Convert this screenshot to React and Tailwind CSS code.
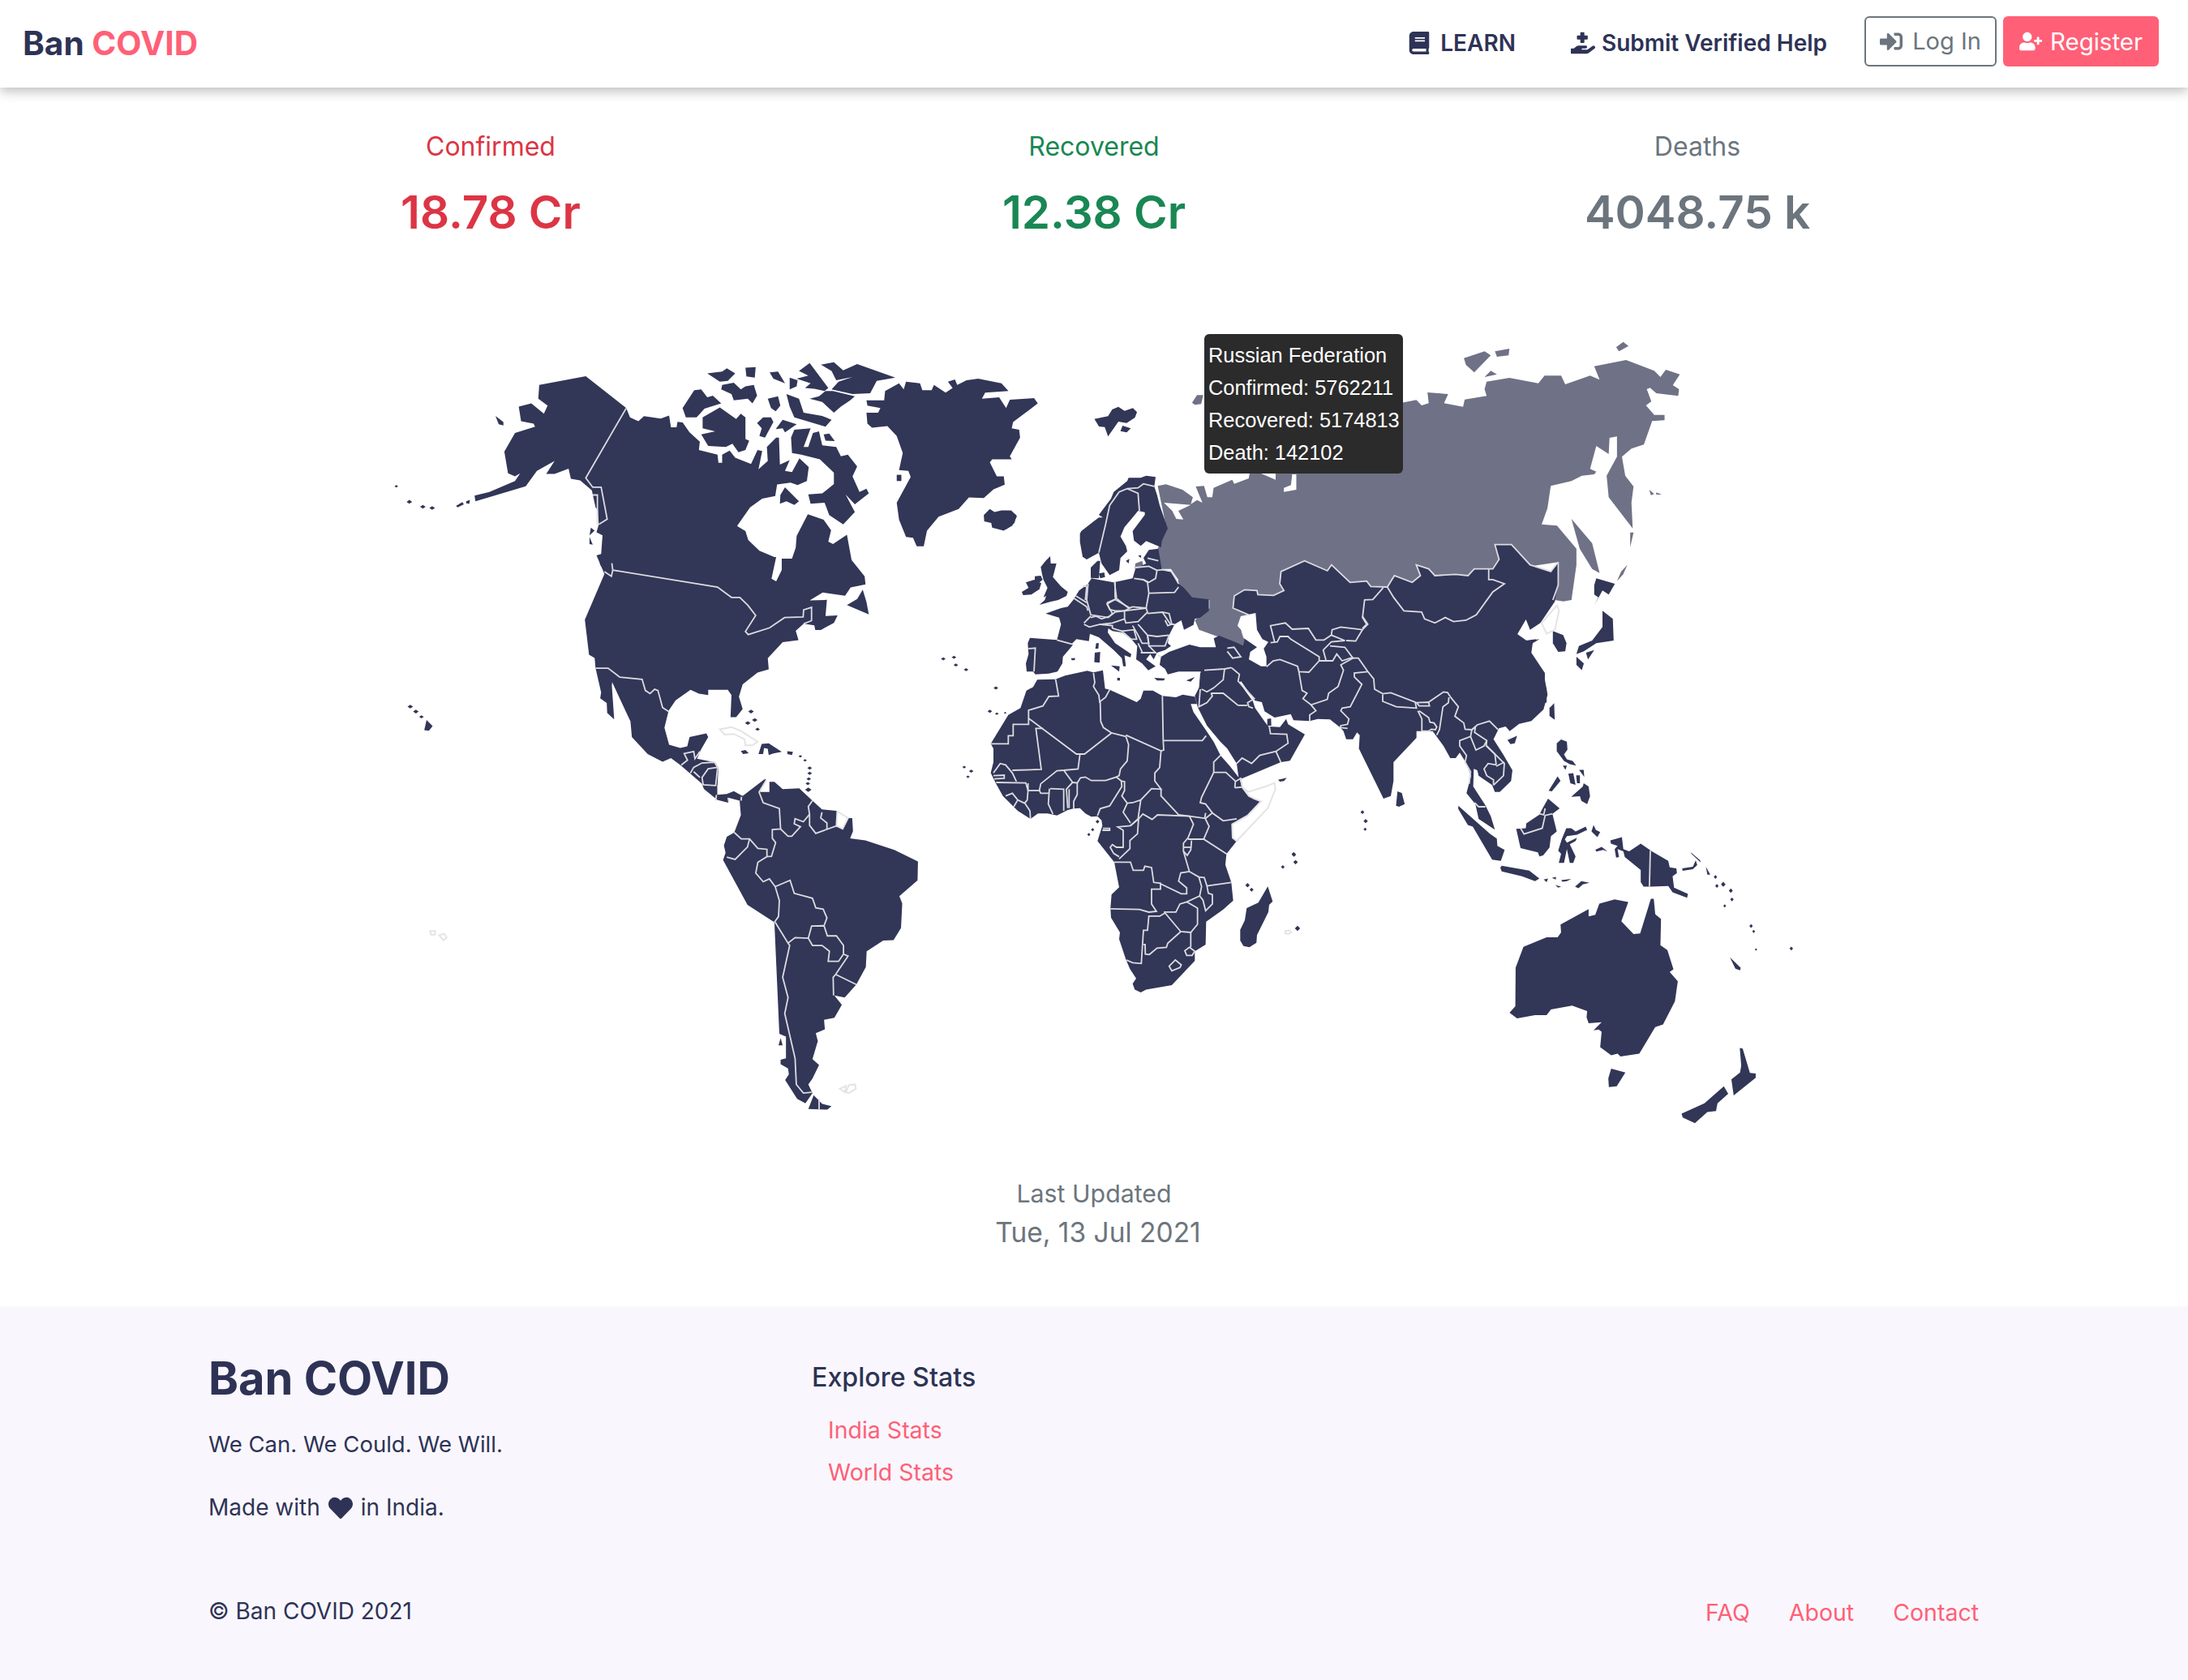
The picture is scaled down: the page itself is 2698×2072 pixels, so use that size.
import { FaBook, FaHandHoldingMedical, FaSignInAlt, FaUserPlus, FaHeart } from 'react-icons/fa';

// small diamond shapes for tiny islands: [x, y, r]
const dots = (list) =>
  list.map(([x, y, r]) => `M${x - r},${y} L${x},${y - r} L${x + r},${y} L${x},${y + r} Z`).join(' ');

// Map data is grouped by region, each with its own translate/scale
const ZONES = [
  {
    // North America, Greenland, Iceland
    t: [460, 400, 0.574, 0.3827],
    land: [
      'M357,195 L457,167 L544,270 L552,300 L570,312 L582,296 L618,304 L636,294 L640,332 L652,332 L654,314 L665,316 L680,348 L702,378 L700,405 L740,420 L742,446 L750,446 L750,420 L766,407 L778,430 L812,450 L826,405 L836,408 L828,467 L848,440 L846,395 L866,365 L872,365 L874,452 L895,438 L885,472 L900,476 L916,432 L936,460 L932,505 L912,518 L897,510 L868,516 L864,553 L836,562 L810,590 L782,650 L800,666 L806,695 L830,730 L862,750 L866,750 L856,820 L866,828 L878,792 L878,755 L900,755 L908,720 L910,682 L934,612 L968,630 L984,664 L978,700 L988,708 L1018,678 L1028,760 L1056,812 L1058,838 L1026,848 L1014,875 L966,864 L938,890 L975,888 L972,940 L998,938 L990,962 L962,985 L950,985 L948,970 L925,965 L908,988 L914,1018 L880,1024 L848,1076 L850,1112 L826,1122 L794,1160 L786,1200 L794,1240 L780,1266 L768,1266 L770,1195 L762,1178 L720,1178 L720,1195 L700,1190 L682,1178 L650,1212 L635,1245 L626,1300 L636,1355 L660,1365 L675,1360 L680,1330 L716,1318 L720,1330 L704,1372 L696,1400 L735,1412 L742,1430 L740,1484 L712,1490 L710,1485 L660,1420 L640,1398 L622,1410 L590,1385 L556,1330 L553,1280 L505,1125 L515,1130 L513,1165 L518,1273 L503,1252 L502,1220 L488,1205 L490,1186 L478,1108 L476,1075 L464,1065 L455,952 L497,805 L493,790 L480,745 L490,740 L493,680 L480,670 L485,645 L483,600 L478,590 L470,535 L445,503 L425,498 L420,465 L390,482 L372,482 L390,440 L352,472 L328,522 L220,570 L218,552 L250,540 L305,505 L316,480 L305,490 L290,480 L282,410 L305,350 L348,330 L345,320 L318,312 L313,265 L340,255 L367,288 L375,262 L355,240 Z',
      'M1040,128 L1122,172 L1082,182 L1068,222 L1030,225 L985,210 L1000,185 L1030,170 L995,180 L985,150 L962,130 L990,122 L1010,148 Z',
      'M938,125 L978,205 L970,215 L948,208 L928,205 L940,190 L910,175 L935,165 L915,150 Z',
      'M718,158 L750,152 L760,142 L778,158 L762,182 L745,185 Z',
      'M800,140 L822,138 L820,172 L802,168 Z',
      'M852,155 L870,152 L885,190 L860,175 Z',
      'M895,172 L912,180 L910,200 L895,210 Z',
      'M750,195 L775,188 L790,210 L800,200 L818,195 L825,230 L815,255 L805,240 L775,245 L770,225 L748,210 Z',
      'M690,212 L705,210 L718,235 L730,230 L748,255 L712,272 L695,300 L672,300 L665,270 Z',
      'M708,300 L745,268 L780,305 L790,288 L800,300 L800,370 L808,375 L800,405 L785,412 L772,385 L758,395 L720,392 L705,355 L735,345 L708,335 Z',
      'M848,240 L870,232 L875,262 L865,280 L855,270 Z',
      'M888,225 L915,240 L925,285 L965,295 L985,308 L972,330 L905,300 L895,265 Z',
      'M972,215 L988,215 L1035,232 L1025,245 L1005,265 L990,285 L965,250 L938,240 L958,232 Z',
      'M825,318 L838,300 L855,300 L860,315 L842,365 L830,360 L835,335 Z',
      'M865,338 L880,308 L910,322 L885,348 L880,335 Z',
      'M905,340 L940,335 L925,395 L935,395 L945,350 L958,345 L965,390 L995,395 L1005,425 L1020,420 L1040,458 L1030,490 L1045,540 L1060,530 L1065,545 L1035,580 L1015,548 L1035,605 L1010,645 L980,615 L970,575 L940,578 L935,548 L965,545 L990,515 L990,478 L960,435 L920,420 L900,415 L898,365 Z',
      'M885,525 L915,570 L905,582 L888,570 L874,578 L875,550 Z',
      'M968,355 L980,352 L992,376 L972,375 Z',
      'M1052,855 L1060,895 L1065,935 L1018,905 L1040,885 Z',
      'M263,295 L280,315 L280,326 L270,322 Z',
      'M178,585 L192,573 L195,580 L182,590 Z',
      'M200,570 L208,566 L207,578 L200,577 Z',
      'M115,1275 L128,1295 L120,1310 L110,1308 Z',
      'M468,655 L476,665 L465,680 Z',
      'M465,685 L472,710 L465,708 Z',
      'M484,745 L495,745 L513,770 L512,798 L497,797 L488,775 Z',
      // Greenland
      'M1100,215 L1130,190 L1140,210 L1145,185 L1175,190 L1180,212 L1200,212 L1205,195 L1230,220 L1245,205 L1235,185 L1250,178 L1255,195 L1275,180 L1300,175 L1350,190 L1365,215 L1315,220 L1308,240 L1345,235 L1360,270 L1368,243 L1420,238 L1428,255 L1375,315 L1372,335 L1388,340 L1390,365 L1368,425 L1372,435 L1330,435 L1325,445 L1340,490 L1355,490 L1357,517 L1333,532 L1312,560 L1280,558 L1258,595 L1215,620 L1190,665 L1183,715 L1168,715 L1160,688 L1145,685 L1130,630 L1125,575 L1155,492 L1150,472 L1130,470 L1138,415 L1125,360 L1105,328 L1072,333 L1062,320 L1060,285 L1085,285 L1090,270 L1062,262 L1060,245 L1098,245 Z',
      'M1125,485 L1135,485 L1135,505 L1125,505 Z',
      // Iceland
      'M1325,595 L1335,605 L1350,600 L1368,600 L1382,615 L1378,640 L1355,665 L1330,655 L1328,640 L1313,635 L1312,615 Z',
      // Caribbean
      'M790,1375 L800,1372 L807,1382 L795,1385 Z',
      'M835,1352 L850,1350 L878,1378 L860,1383 L850,1388 L848,1368 L840,1365 L838,1385 L828,1385 Z',
      'M890,1376 L902,1378 L900,1388 L890,1385 Z',
      dots([[50, 522, 4], [78, 572, 6], [107, 588, 6], [127, 592, 6], [80, 1232, 6], [92, 1248, 6], [104, 1265, 5],
        [812, 1248, 6], [820, 1275, 6], [805, 1285, 6], [826, 1305, 5],
        [918, 1392, 4], [928, 1405, 4], [938, 1430, 5], [938, 1447, 5], [936, 1465, 5], [934, 1480, 5], [935, 1500, 7],
        [1225, 1078, 5], [1248, 1073, 5], [1252, 1098, 5], [1274, 1113, 5], [1338, 1172, 5],
        [1325, 1247, 5], [1340, 1255, 4], [1358, 1252, 3], [1270, 1427, 4], [1285, 1440, 5], [1278, 1458, 4]]),
    ],
    white: ['M1343,455 L1360,450 L1360,470 L1345,468 Z'],
    hollow: ['M745,1305 L770,1298 L790,1310 L800,1320 L826,1345 L815,1357 L800,1357 L798,1337 L775,1320 L755,1322 Z'],
    lines: [
      'M544,270 L457,495 L472,525 L490,525 L503,628 L485,645',
      'M472,550 L482,550 L482,645',
      'M515,792 L740,847 L770,880 L788,880 L805,905 L822,938 L800,990 L806,1000 L852,978 L884,945 L924,943 L925,920 L942,912 L942,955 L925,965',
      'M497,797 L512,812 L515,792 L513,770',
      'M478,1108 L505,1108 L530,1137 L578,1144 L585,1180 L595,1190 L605,1176 L612,1180 L622,1235 L635,1248',
    ],
  },
  {
    // South America, Central America borders
    t: [460, 850, 0.5102, 0.3571],
    land: [
      'M945,312 L950,310 L935,355 L958,355 L958,320 L970,320 L990,345 L1030,342 L1062,385 L1085,415 L1120,420 L1150,445 L1158,445 L1160,490 L1153,515 L1190,522 L1260,555 L1317,595 L1316,660 L1272,715 L1279,740 L1276,825 L1258,867 L1233,868 L1193,905 L1191,960 L1168,1020 L1140,1065 L1115,1058 L1133,1090 L1115,1135 L1090,1142 L1092,1175 L1070,1188 L1075,1215 L1062,1278 L1078,1298 L1062,1345 L1052,1365 L1062,1395 L1045,1430 L1025,1415 L996,1350 L1005,1330 L1003,1310 L985,1295 L985,1280 L998,1275 L998,1200 L982,1190 L970,805 L905,745 L846,590 L852,565 L848,540 L855,510 L873,495 L889,435 L886,385 L897,365 Z',
      'M795,328 L832,328 L832,365 L855,362 L872,352 L892,368 L897,365 L886,385 L860,375 L858,392 L832,382 L800,345 Z',
      'M1065,1402 L1085,1432 L1108,1440 L1098,1452 L1052,1450 Z',
      'M985,1205 L990,1230 L980,1230 Z',
    ],
    white: [],
    hollow: [
      'M1122,422 L1148,445 L1135,482 L1120,472 Z',
      'M1128,1380 L1143,1370 L1140,1392 Z',
      'M1150,1367 L1165,1365 L1167,1380 L1150,1395 L1143,1392 Z',
      'M138,835 L150,835 L150,848 L140,848 Z',
      'M160,850 L172,845 L178,858 L170,867 Z',
    ],
    lines: [
      'M745,262 L760,245 L752,222 L775,215 L778,240 L790,215',
      'M767,290 L775,270 L795,255 L825,252 L833,270 L828,333 L798,330 L795,305 L810,275 L833,270',
      'M775,285 L790,305',
      'M830,365 L828,385', 'M860,390 L858,375', 'M890,385 L890,372',
      'M950,315 L933,355 L943,392 L982,412 L985,483 L965,485 L965,515 L973,530 L963,577 L952,578',
      'M873,495 L890,517 L910,517 L930,550 L952,553 L952,578 L930,598 L925,635 L943,665 L958,655 L972,682 L982,730 L980,785 L970,805',
      'M910,517 L905,545 L875,588 L855,580',
      'M985,483 L1003,508 L1012,508 L1033,475 L1018,465 L1020,447 L1040,458 L1055,432 L1052,405 L1062,385',
      'M1055,432 L1055,470 L1070,498 L1120,472',
      'M1085,425 L1082,445 L1097,462 L1097,485',
      'M972,682 L1008,660 L1018,705 L1062,722 L1070,755 L1088,760 L1097,790 L1090,817',
      'M972,805 L1003,877 L1020,858 L1052,860',
      'M1090,817 L1060,818 L1052,860 L1062,885 L1085,885 L1103,905 L1100,940 L1125,940 L1137,915 L1137,885 L1120,852 L1098,852 L1090,817',
      'M1003,877 L1007,885 L990,995 L1003,1065 L995,1120 L1020,1275 L1023,1365 L1040,1395 L1060,1392',
      'M1137,915 L1148,922 L1118,985 L1112,995 L1113,1058',
      'M1118,985 L1168,1020',
      'M1078,1415 L1078,1452',
    ],
  },
  {
    // Africa
    t: [1200, 800, 0.3333, 0.3333],
    land: [
      'M237,115 L305,113 L340,100 L422,82 L445,88 L480,80 L488,148 L505,152 L555,175 L605,198 L620,185 L630,155 L665,155 L700,175 L750,180 L775,170 L820,178 L828,205 L805,205 L815,235 L860,300 L890,345 L915,395 L950,435 L985,480 L995,515 L1025,545 L1040,555 L1065,560 L1015,620 L960,650 L975,712 L937,760 L933,800 L955,865 L962,932 L925,965 L862,1010 L860,1095 L820,1120 L820,1155 L735,1245 L705,1250 L640,1262 L620,1272 L598,1262 L590,1240 L603,1220 L580,1185 L565,1150 L540,1075 L543,1050 L510,995 L508,960 L512,910 L540,883 L522,790 L498,760 L460,712 L478,655 L475,635 L460,620 L437,622 L415,610 L395,590 L370,592 L350,597 L310,617 L275,610 L240,610 L212,630 L165,600 L110,545 L85,500 L65,460 L75,420 L75,370 L65,352 L130,245 L175,220 L197,155 L222,142 Z',
      'M1090,880 L1108,935 L1095,948 L1092,975 L1050,1060 L1048,1088 L1022,1105 L1000,1100 L988,1080 L988,1040 L1005,1005 L1012,960 L1055,940 Z',
      'M1128,485 L1160,478 L1150,490 L1135,492 Z',
      dots([[1015, 877, 6], [1030, 892, 6], [1187, 762, 8], [1192, 790, 7], [1145, 808, 6], [1200, 1035, 9], [460, 640, 7], [442, 670, 6], [428, 688, 6]]),
    ],
    white: [],
    hollow: [
      'M995,512 L1018,530 L1082,510 L1115,497 L1118,520 L1090,590 L975,712 L960,700 L958,650 L1015,618 L1065,565 L1040,555 L1020,545 Z',
      'M1155,1045 L1170,1042 L1177,1050 L1165,1056 L1155,1054 Z',
    ],
    lines: [
      'M305,113 L316,175 L280,177 L258,212 L205,228 L205,258',
      'M65,352 L130,352 L130,322 L148,322 L148,280 L205,280 L205,258',
      'M205,258 L382,390 L412,390 L512,312 L565,325',
      'M445,90 L450,125 L445,140 L465,172 L468,197 L490,180 L505,152',
      'M470,197 L472,270 L482,292 L512,312',
      'M700,175 L703,340', 'M565,320 L695,378 L705,375 L703,340', 'M703,340 L848,340 L862,322',
      'M258,295 L232,295 L252,447 L145,450',
      'M75,460 L100,425 L120,430 L145,460 L160,492',
      'M395,392 L388,445 L335,450', 'M335,450 L310,452 L250,500 L245,525 L250,535 L280,535',
      'M335,450 L368,495 L345,520 L350,590', 'M368,495 L385,497 L385,540 L372,565 L372,592',
      'M385,497 L397,478 L415,475 L437,488 L490,488 L530,475 L548,490 L550,510 L505,582 L470,592 L460,618',
      'M565,325 L575,355 L570,415 L545,445 L540,470 L530,475',
      'M695,378 L690,440 L672,460 L672,490 L695,520 L660,518 L620,560 L590,570 L570,572 L550,545 L560,525 L560,492 L548,490',
      'M695,520 L695,545 L760,615', 'M570,572 L555,605 L582,645',
      'M620,560 L610,630 L582,655 L535,660 L555,672 L555,735 L530,735 L515,725 L507,735 L520,758 L540,770',
      'M480,665 L505,665 L505,672 L478,672',
      'M582,655 L612,630 L608,685 L580,710 L580,740 L540,778',
      'M612,630 L628,612 L662,632 L682,615 L800,620 L815,650 L795,700 L778,720 L778,750 L800,825 L835,845',
      'M760,615 L800,620 L860,628 L885,608 L925,637 L975,630',
      'M860,608 L857,625 L873,658 L853,705', 'M795,705 L853,705 L938,760', 'M778,735 L808,735',
      'M808,710 L805,745 L792,765 L778,750',
      'M890,458 L845,550 L840,570 L860,575 L885,608', 'M890,458 L935,458 L970,490', 'M890,458 L890,420 L915,395',
      'M968,515 L970,492 L990,480 L995,512 L968,515',
      'M865,878 L955,865',
      'M835,845 L855,847 L865,878 L870,905 L885,910 L885,945 L860,970 L850,930 L838,915 L845,880 L835,845',
      'M522,790 L582,790 L592,820 L630,820 L635,805 L660,810 L668,865 L693,868 L693,890 L660,890 L660,945 L678,972 L650,975 L615,965 L508,963',
      'M800,825 L768,830 L760,860 L790,885 L790,907 L770,907 L693,870',
      'M838,915 L790,937 L765,945 L750,975 L705,975',
      'M790,937 L830,960 L830,1020 L805,1050 L768,1047 L710,978',
      'M710,978 L690,990 L650,990 L645,1042 L630,1042 L622,1165 L590,1162 L567,1152',
      'M768,1047 L720,1090 L715,1105 L680,1108 L652,1132 L637,1130 L636,1095 L630,1095',
      'M805,1050 L805,1105',
      'M800,1105 L820,1120 L810,1135 L790,1135 L783,1118 Z',
      'M748,1152 L770,1170 L765,1180 L735,1192 L725,1175 Z',
      'M282,518 L278,575 L295,612', 'M285,518 L335,520 L335,600', 'M355,520 L355,590',
      'M203,525 L245,525', 'M203,498 L203,525 L200,560 L190,572', 'M190,570 L210,600 L212,630',
      'M85,495 L195,497 L203,525', 'M120,545 L145,535 L165,560 L150,585', 'M165,560 L190,572',
      'M75,470 L115,468 L115,480 L78,482',
    ],
  },
  {
    // Europe, Turkey and the Levant
    t: [1240, 580, 0.3333, 0.3333],
    land: [
      'M190,628 L205,570 L198,545 L148,530 L205,510 L230,505 L250,480 L272,445 L303,422 L318,400 L345,405 L400,415 L470,400 L480,365 L520,345 L510,325 L530,295 L565,290 L578,368 L610,375 L640,420 L660,435 L690,470 L752,478 L752,520 L720,545 L700,550 L695,572 L660,590 L650,555 L625,570 L605,610 L600,640 L612,650 L590,665 L560,675 L548,700 L535,680 L520,700 L555,725 L528,740 L505,715 L483,700 L487,650 L465,625 L430,600 L395,595 L380,585 L378,600 L405,640 L465,680 L462,692 L440,685 L445,725 L435,725 L430,695 L400,665 L345,618 L312,605 L308,632 L262,625 L245,642 Z',
      'M90,620 L190,628 L250,645 L212,690 L210,715 L192,745 L160,752 L110,755 L102,745 L78,745 L75,715 L85,680 L82,640 Z',
      'M60,450 L85,435 L75,415 L105,405 L132,418 L125,440 L95,460 L65,462 Z',
      'M108,392 L130,390 L137,405 L125,415 L108,410 Z',
      'M130,358 L148,335 L165,318 L167,345 L188,345 L175,395 L205,430 L230,450 L225,465 L195,480 L165,487 L125,498 L145,480 L150,465 L140,470 L155,435 L140,405 L135,385 Z',
      'M275,235 L280,225 L325,190 L345,175 L360,175 L345,165 L390,105 L400,80 L450,40 L455,28 L500,28 L520,20 L555,25 L550,60 L560,90 L570,130 L600,215 L578,262 L575,285 L520,262 L500,280 L475,260 L470,225 L515,165 L515,155 L490,150 L470,175 L440,210 L425,245 L445,280 L450,300 L425,325 L420,370 L385,388 L355,345 L345,305 L300,330 L285,320 L275,265 Z',
      'M345,382 L365,378 L368,395 L350,400 Z',
      'M315,398 L315,360 L340,335 L350,335 L345,400 Z',
      'M445,335 L458,328 L455,345 Z',
      'M490,315 L502,315 L500,325 Z',
      'M390,722 L422,725 L420,745 Z',
      'M330,675 L350,672 L348,712 L328,710 Z',
      'M335,640 L345,640 L343,660 L332,660 Z',
      'M242,695 L258,695 L255,703 L245,703 Z',
      'M550,768 L590,770 L585,778 L560,778 Z',
      'M668,778 L700,765 L685,782 Z',
      'M413,768 L423,768 L423,778 L413,778 Z',
      'M575,690 L605,672 L680,645 L720,655 L778,655 L770,622 L790,612 L885,650 L905,680 L950,715 L860,790 L780,880 L712,880 L700,835 L718,800 L722,745 L700,745 L640,745 L600,755 L590,735 L570,720 Z',
      'M0,165 L20,148 L42,170 L25,205 L0,220 Z',
    ],
    gray: ['M480,345 L505,335 L512,362 L478,365 Z'],
    white: [
      'M858,575 L870,540 L925,528 L930,590 L950,625 L972,635 L955,660 L965,690 L965,725 L945,725 L900,700 L905,672 L930,655 L880,620 L870,590 Z',
    ],
    hollow: [],
    lines: [
      'M190,628 L250,645', 'M85,660 L110,658 L105,745',
      'M250,472 L300,505 L305,520', 'M260,465 L300,490', 'M285,428 L300,430 L295,480',
      'M305,420 L300,480 L315,535 L380,545 L395,530 L375,495 L405,478 L410,470 L403,415',
      'M405,410 L405,470 L455,510 L470,505 L520,510 L530,455 L525,415 L510,405',
      'M375,490 L405,478 L460,510 L440,520 L405,520 L385,515 L375,490',
      'M315,545 L335,540 L355,550 L385,540 L405,525 L440,520 L440,550 L395,565 L355,570',
      'M290,565 L315,540', 'M290,570 L310,580 L350,570 L395,575 L395,585',
      'M440,520 L520,510 L525,525 L490,560 L445,565 L440,550',
      'M525,530 L580,525 L610,570 L625,570', 'M605,610 L560,615 L525,610 L490,570',
      'M580,525 L605,530 L615,570 L600,575 L590,555',
      'M530,455 L625,452 L640,432',
      'M560,370 L555,400 L530,415 L510,405 L475,400', 'M480,360 L530,355 L560,370',
      'M525,325 L565,335',
      'M640,420 L615,375 L580,368 L560,370',
      'M525,610 L530,650 L590,650 L605,610',
      'M525,610 L530,640 L505,640 L490,610 L470,575',
      'M430,595 L475,590 L485,625 L465,625 Z', 'M395,585 L430,595',
      'M490,640 L505,672', 'M500,675 L555,675 L530,650', 'M565,685 L575,690',
      'M345,305 L370,200 L385,130 L420,80 L450,68 L490,85 L495,150',
      'M450,68 L490,65 L510,50 L550,60',
    ],
  },
  {
    // Russia, Central and East Asia, Japan
    t: [1300, 400, 0.5102, 0.3333],
    gray: [
      'M250,598 L270,592 L310,612 L335,640 L330,665 L345,650 L358,660 L342,600 L362,598 L370,640 L382,640 L385,605 L430,575 L435,590 L470,570 L490,400 L840,290 L875,280 L888,300 L905,292 L902,252 L952,258 L942,292 L988,305 L992,278 L1045,265 L1040,240 L1045,212 L1100,198 L1170,218 L1185,190 L1225,190 L1235,222 L1295,190 L1318,205 L1305,155 L1382,132 L1450,172 L1465,195 L1478,168 L1512,185 L1495,225 L1510,240 L1508,265 L1455,255 L1440,235 L1432,240 L1443,285 L1430,300 L1450,335 L1475,335 L1475,355 L1445,358 L1425,445 L1395,460 L1372,490 L1380,560 L1400,600 L1395,660 L1398,755 L1340,640 L1335,560 L1360,490 L1360,415 L1342,420 L1340,480 L1310,450 L1295,535 L1310,545 L1305,555 L1275,560 L1250,580 L1200,598 L1192,680 L1178,740 L1215,745 L1262,830 L1262,890 L1250,1020 L1230,1025 L1210,1020 L1218,880 L1000,930 L470,1075 L445,1120 L470,1195 L385,1150 L350,1130 L340,1095 L375,1050 L375,1020 L330,1012 L312,975 L298,975 L300,945 L282,905 L250,905 L250,830 L272,760 Z',
      'M990,125 L1040,100 L1055,115 L1015,178 L995,150 Z',
      'M1065,100 L1100,90 L1098,115 L1070,120 Z',
      'M1040,195 L1055,172 L1070,185 Z',
      'M1358,85 L1375,65 L1388,80 L1365,100 Z',
      'M1250,720 L1300,810 L1318,920 L1300,905 L1270,830 Z',
      'M1392,770 L1400,770 L1392,825 Z',
      'M1385,890 L1375,925 L1360,950 L1370,915 Z',
      'M1438,612 L1450,628 L1442,632 Z',
      'M1455,622 L1468,630 L1455,630 Z',
      'M333,290 L345,262 L360,262 L355,295 L340,298 Z',
    ],
    land: [
      'M1218,880 L1200,915 L1150,890 L1105,815 L1065,815 L1075,870 L1060,905 L1015,905 L1000,930 L970,925 L920,930 L905,905 L875,890 L885,930 L865,955 L822,930 L805,972 L765,970 L755,950 L715,955 L670,890 L660,912 L605,875 L548,915 L545,960 L555,985 L530,1003 L492,1000 L490,985 L460,982 L435,1005 L432,1050 L470,1075 L445,1120 L470,1195 L470,1300 L800,1500 L1190,1400 L1190,1350 L1180,1300 L1150,1230 L1150,1190 L1165,1165 L1140,1170 L1118,1150 L1140,1092 L1150,1130 L1175,1105 L1210,1025 L1218,950 Z',
      'M1205,1135 L1230,1150 L1238,1180 L1235,1210 L1218,1212 L1205,1180 Z',
      'M1305,965 L1310,940 L1355,960 L1340,1000 L1325,985 L1305,1040 L1315,1010 L1305,1000 Z',
      'M1325,1060 L1350,1090 L1352,1170 L1310,1180 L1280,1210 L1262,1220 L1268,1190 L1300,1170 L1325,1120 Z',
      'M1262,1230 L1280,1255 L1275,1280 L1262,1260 Z',
      'M1285,1215 L1305,1205 L1290,1240 Z',
      'M97,350 L130,340 L140,315 L155,305 L170,320 L190,310 L200,325 L195,345 L175,365 L155,360 L130,415 L122,380 L108,378 Z',
      'M165,375 L185,385 L175,400 L160,395 Z',
    ],
    white: [
      'M265,660 L330,668 L300,690 L312,722 L295,720 L285,690 Z',
      'M555,620 L585,612 L585,555 L575,555 L572,595 L555,605 Z',
      'M500,552 L535,550 L535,575 Z',
    ],
    hollow: ['M1178,1105 L1215,1040 L1220,1060 L1210,1130 L1190,1145 Z'],
    lines: [
      'M805,972 L820,1010 L845,1060 L888,1065 L895,1090 L920,1105 L945,1085 L965,1100 L995,1095 L1020,1075 L1060,990 L1088,960 L1060,945 L1050,945 L1050,905',
      'M795,975 L770,1018 L750,1020 L745,1085 L755,1110 L745,1125',
      'M1218,880 L1200,915 L1150,890 L1105,815 L1065,815 L1075,870 L1060,905 L1015,905 L1000,930 L970,925 L920,930 L905,905 L875,890 L885,930 L865,955 L822,930 L805,972 L765,970 L755,950 L715,955 L670,890 L660,912 L605,875 L548,915 L545,960 L555,985 L530,1003 L492,1000 L490,985 L460,982 L435,1005 L432,1050 L470,1075',
      'M1218,880 L1218,965 L1205,1020',
    ],
  },
  {
    // South Asia and Arabia
    t: [1460, 760, 0.3333, 0.3333],
    land: [
      'M262,312 L288,318 L298,352 L335,375 L395,362 L405,385 L465,388 L495,380 L540,382 L578,412 L590,425 L600,455 L625,455 L640,430 L650,440 L647,490 L738,675 L765,665 L775,610 L775,540 L860,450 L860,425 L885,425 L920,425 L960,480 L985,525 L1005,525 L1020,505 L1045,545 L1062,590 L1045,655 L1078,695 L1090,750 L1150,790 L1135,740 L1115,700 L1070,630 L1072,565 L1085,570 L1090,590 L1140,625 L1150,650 L1168,650 L1210,610 L1215,570 L1180,510 L1145,455 L1165,415 L1190,408 L1205,425 L1240,398 L1285,388 L1330,345 L1345,290 L1335,235 L1335,210 L1285,135 L1290,100 L1315,85 L1270,92 L1232,65 L1245,25 L1240,0 L240,0 L220,105 L175,190 Z',
      'M263,340 L300,392 L312,408 L355,410 L378,380 L385,400 L447,437 L392,535 L358,540 L203,605 L195,545 L160,490 L135,465 L85,405 L50,335 L60,210 L175,190 L200,240 L255,315 Z',
      'M308,380 L322,378 L323,405 L308,405 Z',
      dots([[660, 725, 7], [672, 758, 8], [670, 788, 6], [405, 880, 7], [413, 910, 8], [366, 928, 6], [235, 995, 8], [250, 1012, 7], [420, 1155, 9]]),
    ],
    white: [],
    hollow: [],
    lines: [
      'M335,95 L320,35 L375,25 L400,48 L460,45 L488,88 L518,88 L545,70 L595,90 L545,95 L515,125 L525,162',
      'M545,70 L548,50 L580,40 L660,50 L680,30 L660,0',
      'M305,187 L330,165 L355,160 L420,185 L425,205 L462,207 L500,165 L500,150 L395,85 L385,75 L355,75 L345,95 L320,98',
      'M500,165 L525,165 L550,165 L565,140 L585,165 L615,155 L625,155 L595,115 L540,110',
      'M600,90 L635,92 L660,50',
      'M425,205 L437,275 L455,285 L440,305 L470,328 L530,308 L535,285 L570,260 L590,200 L580,180 L625,155',
      'M470,328 L488,350 L465,365 L465,388',
      'M680,205 L630,210 L630,225 L658,252 L615,335 L585,340 L580,350 L610,380 L605,400 L580,405 L578,412 L605,415',
      'M625,155 L645,155 L680,205 L702,232 L705,270 L735,287 L765,283 L855,318 L860,340 L785,335 L735,315 L735,290',
      'M860,320 L905,318 L908,332 L870,332 Z',
      'M905,318 L960,280 L975,282 L985,298',
      'M980,300 L978,320 L958,335 L945,420 L935,440',
      'M985,298 L1015,335 L1002,370 L1035,395 L1040,418 L1065,420 L1085,402 L1130,388 L1162,420',
      'M865,350 L880,380 L880,425 L905,425 L915,418 L930,420 L935,410 L925,395 L910,392 L905,375 L870,350',
      'M1065,420 L1060,445 L1020,460 L1020,480 L1045,515 L1040,540 L1060,575 L1055,620',
      'M1065,420 L1078,410 L1075,430 L1120,460 L1110,480 L1080,495 L1060,445',
      'M1120,460 L1118,480 L1150,510 L1155,550',
      'M1120,480 L1185,545 L1182,590 L1145,625',
      'M1155,550 L1125,545 L1110,565 L1120,590 L1145,605 L1145,625', 'M1185,540 L1155,555',
      'M1075,690 L1090,705 L1115,705',
      'M175,190 L205,215 L200,240 L260,305 L235,320 L240,335 L255,340',
      'M200,330 L235,330', 'M100,285 L145,285 L200,330',
      'M150,195 L145,235 L110,265 L85,280 L65,270', 'M75,200 L150,195 L175,190',
      'M60,270 L55,335 L85,320 L105,295 L100,285',
      'M315,405 L320,435 L380,437 L385,470 L340,500 L280,515 L250,545 L215,525 L195,545',
      'M340,500 L358,540',
      'M160,118 L185,115 L210,150 L180,155 L160,130',
    ],
  },
  {
    // South-East Asia islands, Australia, New Zealand, Pacific
    t: [1700, 800, 0.3571, 0.3955],
    land: [
      'M275,490 L385,578 L408,592 L410,615 L435,628 L422,662 L392,658 L325,555 L308,550 L275,500 Z',
      'M420,683 L425,677 L520,692 L555,717 L540,725 L495,710 L425,695 Z',
      'M475,562 L508,560 L510,545 L555,518 L568,495 L585,468 L625,498 L600,515 L615,570 L595,585 L590,620 L568,645 L555,648 L550,635 L490,622 Z',
      'M648,560 L665,560 L680,570 L715,555 L720,565 L685,580 L650,585 L643,595 L650,605 L685,590 L680,600 L660,610 L680,648 L672,668 L660,668 L650,625 L640,668 L622,668 L630,640 L620,630 L632,595 Z',
      'M735,570 L742,550 L750,565 L765,572 L755,588 Z',
      'M570,720 L585,717 L580,728 Z', 'M598,715 L612,712 L612,720 Z', 'M630,722 L665,718 L650,725 L635,727 Z',
      'M610,737 L630,742 L620,745 Z', 'M678,742 L700,725 L728,730 L705,735 L690,747 Z',
      'M748,627 L770,618 L790,632 L775,628 L752,633 Z',
      'M800,598 L840,588 L845,625 L865,632 L905,608 L940,630 L1000,662 L1005,682 L1028,685 L1030,700 L1015,710 L1020,745 L1068,765 L1065,777 L1015,760 L1000,740 L940,742 L915,742 L905,728 L905,690 L850,650 L845,632 L825,625 L830,650 L820,652 L815,625 L825,615 L802,608 Z',
      'M615,295 L630,283 L650,290 L652,315 L640,330 L650,345 L670,350 L682,365 L660,360 L640,350 L615,320 Z',
      'M636,365 L650,365 L645,378 Z', 'M692,378 L708,378 L710,400 Z', 'M655,390 L672,388 L680,425 L662,420 Z',
      'M682,395 L695,395 L695,420 L685,420 Z',
      'M665,462 L705,430 L708,420 L725,430 L730,460 L720,485 L700,475 L695,460 Z',
      'M587,443 L618,398 L628,412 L598,445 Z',
      'M65,445 L80,450 L90,485 L70,493 L60,490 Z',
      'M606,170 L608,222 L590,210 L590,185 Z',
      'M445,285 L478,272 L470,295 L455,298 Z',
      'M1078,635 L1110,660 L1112,667 L1080,640 Z',
      'M1048,685 L1085,680 L1095,660 L1100,675 L1085,688 L1050,693 Z',
      'M1130,680 L1145,705 L1135,705 Z',
      'M1213,963 L1250,995 L1248,1003 L1232,998 Z',
      dots([[1163, 712, 6], [1168, 740, 6], [1190, 735, 8], [1216, 755, 7], [1220, 782, 6], [1195, 802, 5], [1286, 865, 6], [1295, 882, 5], [1303, 938, 4], [1425, 935, 6]]),
      // Australia
      'M500,930 L580,900 L618,900 L630,885 L628,860 L725,812 L725,835 L748,830 L762,795 L815,782 L862,790 L838,850 L880,890 L903,888 L940,780 L950,780 L955,828 L975,843 L973,925 L997,940 L1018,1000 L1005,1008 L1033,1037 L1023,1100 L982,1172 L955,1180 L900,1263 L835,1272 L825,1263 L803,1268 L765,1243 L770,1195 L760,1188 L742,1190 L770,1165 L725,1168 L718,1150 L720,1130 L668,1113 L595,1125 L580,1143 L540,1143 L478,1153 L452,1135 L472,1115 L473,995 Z',
      'M803,1310 L852,1322 L822,1365 L795,1367 L793,1340 Z',
      // New Zealand
      'M1247,1245 L1257,1247 L1282,1323 L1302,1325 L1302,1338 L1226,1393 L1218,1343 L1248,1322 L1252,1300 Z',
      'M1046,1450 L1125,1418 L1192,1365 L1207,1388 L1170,1418 L1165,1442 L1135,1445 L1092,1480 L1050,1462 Z',
    ],
    white: [],
    hollow: [],
    lines: [
      'M490,560 L502,578 L565,560 L575,520 L600,515',
      'M555,515 L570,518 L575,498',
      'M938,630 L935,742',
    ],
  },
];

function Layer({ name, fill }) {
  return ZONES.map((z, i) => (
    <g key={i} transform={`translate(${z.t[0]} ${z.t[1]}) scale(${z.t[2]} ${z.t[3]})`}>
      {(z[name] || []).map((d, j) => <path key={j} d={d} fill={fill} />)}
    </g>
  ));
}

function WorldMap() {
  return (
    <svg viewBox="459 400 1780 1000" className="block w-[1780px] h-[1000px]">
      <Layer name="gray" fill="#6f7186" />
      <Layer name="land" fill="#323657" />
      <Layer name="white" fill="#ffffff" />
      {ZONES.map((z, i) => (
        <g key={i} transform={`translate(${z.t[0]} ${z.t[1]}) scale(${z.t[2]} ${z.t[3]})`}>
          {z.hollow.map((d, j) => (
            <path key={j} d={d} fill="#ffffff" stroke="#e4e4e4" strokeWidth="2" vectorEffect="non-scaling-stroke" />
          ))}
          {z.lines.map((d, j) => (
            <path key={j} d={d} fill="none" stroke="#dcdce0" strokeWidth="1.8" vectorEffect="non-scaling-stroke" />
          ))}
        </g>
      ))}
    </svg>
  );
}

function Stat({ label, value, color }) {
  return (
    <div className={`text-center ${color}`}>
      <div className="text-[32px] leading-[48px]">{label}</div>
      <div className="mt-[21px] text-[56.5px] leading-[72px] font-semibold">{value}</div>
    </div>
  );
}

export default function App() {
  return (
    <div className="font-['Inter',sans-serif] bg-white text-[#2e3356] min-h-[2072px]">
      {/* Top navigation */}
      <nav className="relative z-10 h-[108px] pl-[28px] pr-[36px] flex items-center justify-between bg-white shadow-[0_4px_14px_rgba(0,0,0,0.28)]">
        <div className="text-[40.6px] font-bold leading-none">
          Ban <span className="text-[#ff6077]">COVID</span>
        </div>
        <div className="mb-[2px] flex items-center text-[28px] font-semibold">
          <a className="flex items-center gap-[12px]">
            <FaBook size={28} />
            <span>LEARN</span>
          </a>
          <a className="ml-[68px] flex items-center gap-[8px]">
            <FaHandHoldingMedical size={30} />
            <span>Submit Verified Help</span>
          </a>
          <a className="ml-[46px] mb-[4px] h-[62px] w-[163px] flex items-center justify-center gap-[12px] rounded-[6px] border-2 border-[#6c757d] text-[29px] text-[#6c757d] font-normal">
            <FaSignInAlt size={28} />
            <span>Log In</span>
          </a>
          <a className="ml-[8px] mb-[4px] h-[62px] w-[192px] flex items-center justify-center gap-[10px] rounded-[6px] bg-[#ff6077] text-[29.5px] text-white font-normal">
            <FaUserPlus size={28} />
            <span>Register</span>
          </a>
        </div>
      </nav>

      {/* Totals */}
      <section className="pt-[49px] px-[233px] grid grid-cols-3">
        <Stat label="Confirmed" value="18.78 Cr" color="text-[#dc3545]" />
        <Stat label="Recovered" value="12.38 Cr" color="text-[#198754]" />
        <Stat label="Deaths" value="4048.75 k" color="text-[#6c757d]" />
      </section>

      {/* Map with hover tooltip */}
      <section className="relative mt-[102px] flex justify-center">
        <WorldMap />
        <div className="absolute left-[1485px] top-[12px] w-[245px] h-[172px] rounded-[6px] bg-[#2b2b2b] pl-[5px] pt-[6px] font-['Liberation_Sans',sans-serif] text-[25.4px] leading-[40px] text-white">
          <div>Russian Federation</div>
          <div>Confirmed: 5762211</div>
          <div>Recovered: 5174813</div>
          <div>Death: 142102</div>
        </div>
      </section>

      <section className="mt-[48px] text-center text-[#6c757d]">
        <div className="text-[30.3px] leading-[48px]">Last Updated</div>
        <div className="pl-[10px] text-[33.5px] leading-[48px]">Tue, 13 Jul 2021</div>
      </section>

      {/* Footer */}
      <footer className="mt-[67px] h-[462px] bg-[#f9f7fd] pt-[56px] pl-[257px] pr-[258px]">
        <div className="flex">
          <div className="w-[744px]">
            <h2 className="text-[56px] leading-[67px] font-bold">Ban COVID</h2>
            <p className="mt-[25px] text-[27.5px] leading-[45px]">We Can. We Could. We Will.</p>
            <p className="mt-[33px] text-[28px] leading-[45px] flex items-center gap-[10px]">
              Made with <FaHeart size={30} /> in India.
            </p>
          </div>
          <div>
            <h3 className="mt-[8px] text-[32.2px] leading-[48px] font-medium">Explore Stats</h3>
            <ul className="mt-[15px] pl-[20px] text-[28.5px] leading-[52px] text-[#ff6077]">
              <li>India Stats</li>
              <li>World Stats</li>
            </ul>
          </div>
        </div>
        <div className="mt-[81px] flex items-center justify-between text-[28px] leading-[45px]">
          <span>© Ban COVID 2021</span>
          <div className="pt-[3px] flex gap-[48px] text-[28.5px] text-[#ff6077]">
            <a>FAQ</a>
            <a>About</a>
            <a>Contact</a>
          </div>
        </div>
      </footer>
    </div>
  );
}
